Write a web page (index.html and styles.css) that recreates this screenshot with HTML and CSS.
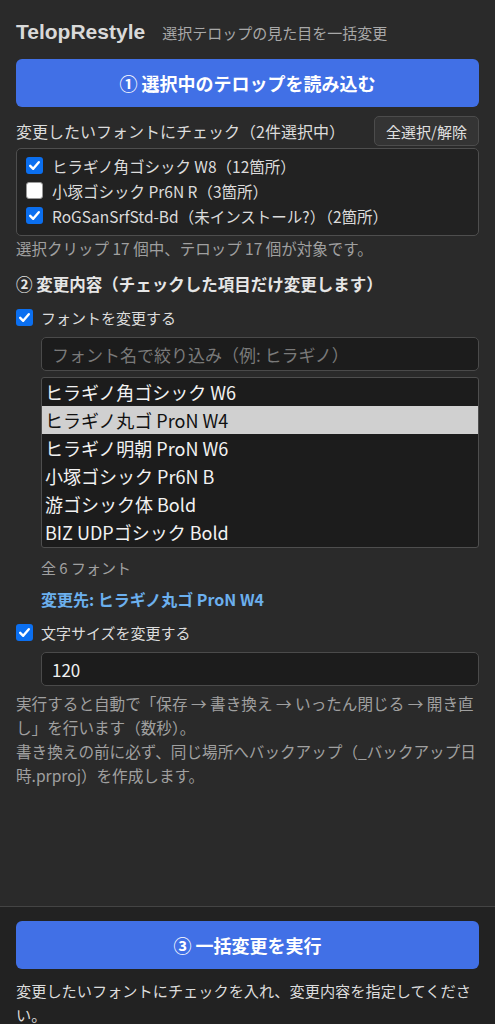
FILE: index.html
```html
<!DOCTYPE html>
<html lang="ja">
<head>
<meta charset="utf-8">
<title>TelopRestyle</title>
<link rel="stylesheet" href="styles.css">
</head>
<body>
<div class="app">
  <main class="main">
    <header class="header">
      <h1 class="title">TelopRestyle</h1>
      <span class="subtitle">選択テロップの見た目を一括変更</span>
    </header>

    <button class="primary-btn">① 選択中のテロップを読み込む</button>

    <div class="select-head">
      <span class="label">変更したいフォントにチェック（2件選択中）</span>
      <button class="small-btn">全選択/解除</button>
    </div>

    <div class="font-box">
      <label class="check-row">
        <span class="cb checked"><svg viewBox="0 0 17 17" width="17" height="17"><path d="M4.2 8.8 L7.2 11.8 L12.8 5.2" fill="none" stroke="#fff" stroke-width="2.4" stroke-linecap="round" stroke-linejoin="round"/></svg></span>
        <span>ヒラギノ角ゴシック W8（12箇所）</span>
      </label>
      <label class="check-row">
        <span class="cb"></span>
        <span>小塚ゴシック Pr6N R（3箇所）</span>
      </label>
      <label class="check-row">
        <span class="cb checked"><svg viewBox="0 0 17 17" width="17" height="17"><path d="M4.2 8.8 L7.2 11.8 L12.8 5.2" fill="none" stroke="#fff" stroke-width="2.4" stroke-linecap="round" stroke-linejoin="round"/></svg></span>
        <span>RoGSanSrfStd-Bd（未インストール?）（2箇所）</span>
      </label>
    </div>

    <p class="muted note">選択クリップ 17 個中、テロップ 17 個が対象です。</p>

    <h2 class="section-title">② 変更内容（チェックした項目だけ変更します）</h2>

    <label class="check-row option">
      <span class="cb checked"><svg viewBox="0 0 17 17" width="17" height="17"><path d="M4.2 8.8 L7.2 11.8 L12.8 5.2" fill="none" stroke="#fff" stroke-width="2.4" stroke-linecap="round" stroke-linejoin="round"/></svg></span>
      <span>フォントを変更する</span>
    </label>

    <div class="indent">
      <input class="text-input search" type="text" placeholder="フォント名で絞り込み（例: ヒラギノ）">
      <ul class="list">
        <li>ヒラギノ角ゴシック W6</li>
        <li class="selected">ヒラギノ丸ゴ ProN W4</li>
        <li>ヒラギノ明朝 ProN W6</li>
        <li>小塚ゴシック Pr6N B</li>
        <li>游ゴシック体 Bold</li>
        <li>BIZ UDPゴシック Bold</li>
      </ul>
      <p class="muted count">全 6 フォント</p>
      <p class="target">変更先: ヒラギノ丸ゴ ProN W4</p>
    </div>

    <label class="check-row option">
      <span class="cb checked"><svg viewBox="0 0 17 17" width="17" height="17"><path d="M4.2 8.8 L7.2 11.8 L12.8 5.2" fill="none" stroke="#fff" stroke-width="2.4" stroke-linecap="round" stroke-linejoin="round"/></svg></span>
      <span>文字サイズを変更する</span>
    </label>

    <div class="indent">
      <input class="text-input size" type="text" value="120">
    </div>

    <p class="muted help">実行すると自動で「保存 → 書き換え → いったん閉じる → 開き直し」を行います（数秒）。<br>書き換えの前に必ず、同じ場所へバックアップ（_バックアップ日時.prproj）を作成します。</p>
  </main>

  <footer class="footer">
    <button class="primary-btn">③ 一括変更を実行</button>
    <p class="status">変更したいフォントにチェックを入れ、変更内容を指定してください。</p>
  </footer>
</div>
</body>
</html>
```

FILE: styles.css
```css
* { box-sizing: border-box; }

html, body {
  margin: 0;
  padding: 0;
  height: 100%;
  background: #2a2a2a;
}

body {
  font-family: "Noto Sans CJK JP", "Noto Sans", sans-serif;
  color: #dcdcdc;
  font-size: 15px;
  line-height: 20px;
  overflow: hidden;
}

.app {
  height: 100vh;
  display: flex;
  flex-direction: column;
}

.main {
  flex: 1;
  padding: 20px 16px 0;
  overflow: hidden;
}

.header {
  display: flex;
  align-items: baseline;
  gap: 17px;
  height: 24px;
}

.title {
  margin: 0;
  font-family: "Liberation Sans", "Noto Sans CJK JP", sans-serif;
  font-size: 21px;
  line-height: 24px;
  font-weight: 700;
  color: #d9d9d9;
}

.subtitle {
  font-size: 15px;
  color: #a8a8a8;
}

.primary-btn {
  display: block;
  width: 100%;
  height: 48px;
  border: none;
  border-radius: 6px;
  background: #4170e6;
  color: #ffffff;
  font-family: "Noto Sans CJK JP", sans-serif;
  font-size: 18px;
  font-weight: 700;
  cursor: pointer;
}

.main .primary-btn { margin-top: 15px; }

.select-head {
  margin-top: 9px;
  display: flex;
  align-items: center;
  justify-content: space-between;
  height: 30px;
}

.label {
  color: #dcdcdc;
  font-size: 16px;
}

.small-btn {
  height: 30px;
  width: 105px;
  padding: 0;
  background: #343434;
  border: 1px solid #4c4c4c;
  border-radius: 5px;
  color: #e0e0e0;
  font-family: "Noto Sans CJK JP", sans-serif;
  font-size: 15px;
}

.font-box {
  margin-top: 2px;
  border: 1px solid #4e4e4e;
  border-radius: 5px;
  background: #222222;
  padding: 4px 9px 7px;
  font-size: 15.5px;
}

.check-row {
  display: flex;
  align-items: center;
  gap: 9px;
  height: 25px;
}

.cb {
  flex: none;
  width: 17px;
  height: 17px;
  border-radius: 3px;
  background: #ffffff;
  border: 1px solid #999;
  display: flex;
}

.cb.checked {
  background: #0b6ff0;
  border: none;
}

.note {
  margin: 2px 0 0;
  font-size: 15.5px;
}

.muted { color: #a0a0a0; }

.section-title {
  margin: 16px 0 0;
  font-size: 16.5px;
  line-height: 20px;
  font-weight: 700;
  color: #e6e6e6;
}

.option {
  margin-top: 11px;
  gap: 8px;
}

.indent {
  padding-left: 25px;
}

.text-input {
  display: block;
  width: 100%;
  height: 34px;
  background: #1c1c1c;
  border: 1px solid #4a4a4a;
  border-radius: 5px;
  color: #f0f0f0;
  font-family: "Noto Sans CJK JP", sans-serif;
  font-size: 17px;
  padding: 0 10px;
  outline: none;
}

.text-input::placeholder { color: #7a7a7a; }

.search { margin-top: 7px; }

.size { margin-top: 7px; }

.list {
  list-style: none;
  margin: 6px 0 0;
  padding: 0 0 1px;
  border: 1px solid #4e4e4e;
  border-radius: 3px;
  background: #1c1c1c;
  overflow: hidden;
}

.list li {
  height: 28px;
  line-height: 28px;
  padding-left: 3px;
  font-size: 18px;
  color: #f2f2f2;
}

.list li.selected {
  background: #d0d0d0;
  color: #111111;
}

.count {
  margin: 10px 0 0;
}

.target {
  margin: 11px 0 0;
  color: #6cb0ee;
  font-weight: 700;
  font-size: 16px;
}

.help {
  margin: 5px 0 0;
  line-height: 24px;
  font-size: 15.6px;
}

.footer {
  flex: none;
  height: 118px;
  background: #222222;
  border-top: 1px solid #444444;
  padding: 14px 16px 0;
}

.status {
  margin: 9px 0 0;
  line-height: 24px;
  color: #dcdcdc;
  font-size: 15.2px;
}
```
